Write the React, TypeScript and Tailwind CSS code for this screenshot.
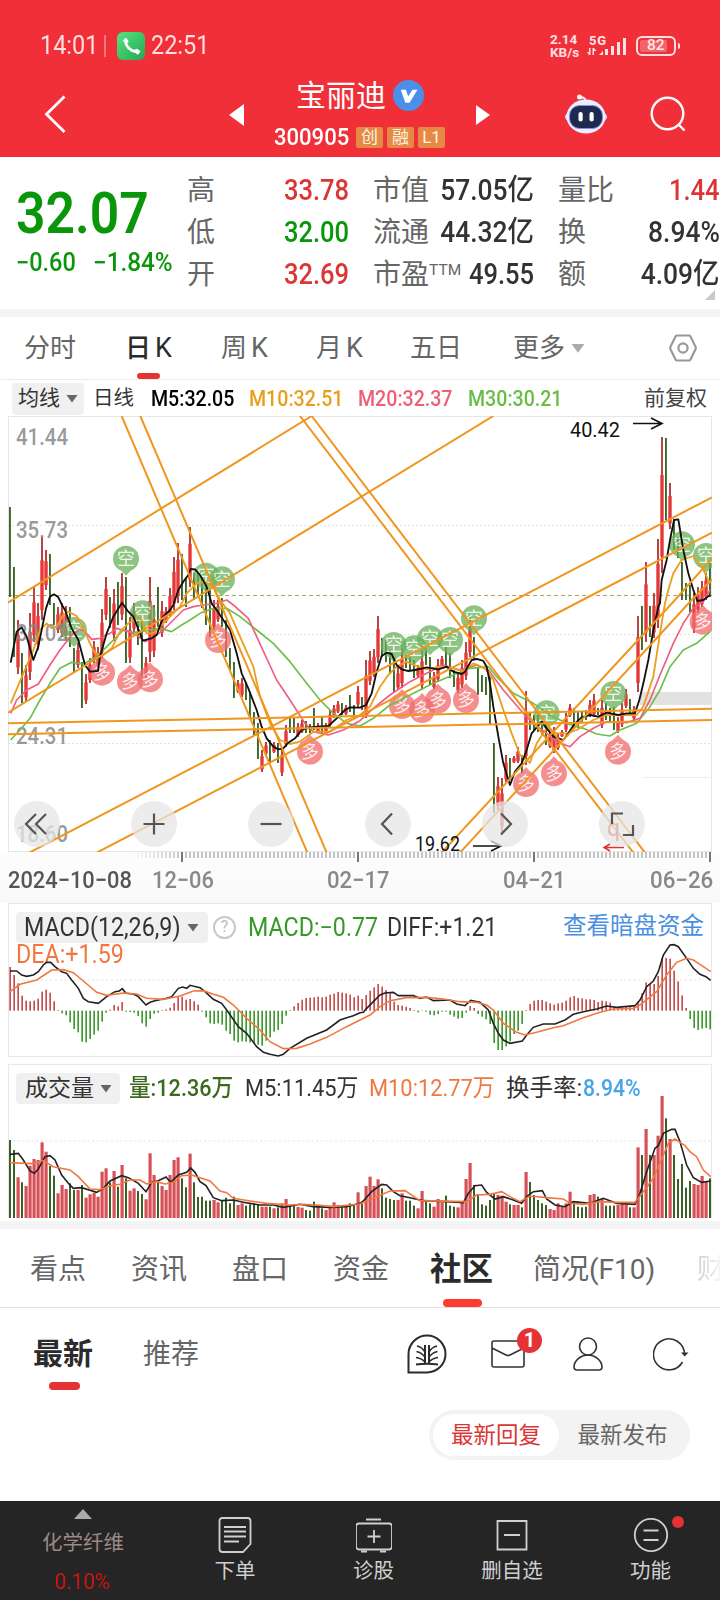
import type { ReactNode } from 'react'
import clsx from 'clsx'

// [high, low] per trading day, negative high = falling candle
const CANDLES: [number, number][] = [
  [-507, 597], [-567, 657], [620, 674], [-653, 703], [665, 702], [613, 680], [587, 642], [603, 650], [537, 620], [550, 590],
  [-554, 605], [-603, 625], [607, 633], [603, 637], [606, 640], [-607, 647], [-648, 672], [643, 668], [-662, 708], [674, 704],
  [658, 683], [641, 663], [647, 667], [609, 658], [577, 620], [-597, 628], [589, 641], [-582, 625], [573, 620], [-577, 663],
  [617, 663], [603, 632], [-617, 645], [-620, 677], [657, 678], [577, 662], [605, 657], [-587, 627], [601, 637], [607, 623],
  [588, 617], [557, 610], [543, 603], [-554, 600], [-577, 607], [527, 587], [-573, 600], [-573, 597], [-577, 608], [-583, 625],
  [-590, 637], [600, 630], [600, 622], [-598, 627], [-620, 657], [-648, 670], [-662, 698], [680, 693], [678, 697], [-682, 700],
  [-692, 717], [-712, 735], [-723, 759], [750, 772], [742, 755], [-740, 762], [742, 753], [-743, 763], [747, 776], [725, 747],
  [-718, 733], [-718, 733], [723, 737], [720, 733], [-721, 733], [-724, 733], [-708, 730], [723, 733], [-717, 733], [723, 735],
  [710, 727], [705, 718], [701, 713], [-703, 715], [705, 715], [-695, 712], [-705, 717], [686, 707], [-697, 710], [660, 718],
  [651, 685], [649, 677], [616, 663], [-638, 657], [-640, 662], [-650, 673], [-657, 692], [667, 690], [648, 688], [-655, 668],
  [-657, 670], [-660, 678], [665, 677], [650, 690], [-650, 665], [-657, 685], [672, 689], [659, 682], [656, 667], [-647, 667],
  [-653, 678], [-670, 687], [672, 693], [660, 688], [642, 680], [617, 657], [-637, 660], [-668, 695], [-675, 692], [-677, 695],
  [-675, 724], [-743, 813], [777, 810], [778, 833], [755, 782], [-758, 780], [756, 763], [747, 763], [-755, 773], [691, 765],
  [-712, 730], [-715, 730], [-715, 732], [-720, 735], [-723, 745], [733, 748], [727, 753], [733, 750], [730, 737], [713, 732],
  [704, 717], [-708, 728], [-712, 728], [-712, 722], [-710, 720], [700, 717], [694, 717], [-708, 715], [700, 728], [-703, 720],
  [-708, 722], [-707, 730], [717, 733], [703, 727], [689, 708], [-699, 715], [706, 720], [616, 692], [-606, 650], [562, 642],
  [-606, 637], [593, 638], [539, 628], [437, 573], [-438, 520], [483, 529], [-519, 550], [-537, 558], [-562, 600], [-583, 600],
  [-585, 612], [593, 633], [587, 613], [581, 607], [573, 600], [-562, 597],
]

const HIST = [
  131, 107, 82, 45, 30, 28, 30, 36, 57, 63, 54, 28, 2, -8, -14, -35, -55, -65, -93, -95, -85, -72, -60, -33, -6, 3, 17, 13, 26, -3,
  -4, -6, -16, -38, -48, -25, -9, -6, 2, 4, 9, 23, 42, 42, 33, 35, 28, 18, -3, -20, -38, -40, -38, -42, -60, -70, -90, -95, -92, -93,
  -95, -100, -102, -105, -90, -80, -63, -58, -40, -15, 2, 13, 23, 33, 38, 39, 40, 42, 40, 42, 48, 51, 56, 54, 52, 48, 40, 45,
  35, 47, 60, 70, 80, 72, 62, 52, 27, 17, 15, 12, 8, 2, -5, 1, -3, -12, -14, -10, -3, -3, -12, -18, -24, -22, -6, 14, 8, -10, -18, -26,
  -40, -97, -118, -118, -107, -92, -70, -60, -40, 2, 20, 30, 32, 32, 27, 22, 18, 22, 24, 30, 40, 44, 38, 37, 34, 34, 32, 26, 30, 28,
  24, 12, 8, 10, 14, 14, 16, 28, 52, 85, 80, 80, 104, 158, 158, 156, 120, 88, 46, 8, -25, -52, -58, -54, -52, -56,
]

const VOLUME = [
  735, 765, 847, 862, 873, 812, 792, 795, 742, 770, 813, 842, 895, 870, 882, 865, 885, 885, 870, 908, 898, 893, 905, 830, 820, 862, 828, 875, 810, 850,
  887, 880, 888, 897, 913, 775, 840, 860, 873, 885, 840, 795, 787, 850, 877, 776, 862, 906, 905, 917, 917, 915, 922, 917, 908, 925, 905, 930, 925, 932,
  928, 928, 928, 935, 935, 935, 940, 937, 925, 912, 930, 930, 936, 938, 945, 947, 920, 932, 940, 945, 932, 922, 930, 930, 932, 925, 932, 892,
  925, 873, 845, 873, 853, 880, 908, 912, 915, 915, 895, 917, 917, 932, 940, 888, 920, 925, 935, 912, 922, 902, 932, 935, 937, 920, 852, 804, 870, 897,
  928, 932, 915, 895, 900, 902, 920, 928, 930, 930, 937, 831, 861, 900, 915, 925, 930, 942, 945, 925, 935, 925, 890, 920, 935, 937, 935, 900, 897, 905,
  912, 932, 932, 932, 930, 925, 928, 937, 937, 757, 780, 702, 780, 780, 722, 603, 670, 732, 780, 852, 807, 878, 858, 867, 870, 843, 860, 850,
]

const M5 =
  '32,1058 50,965 65,952 80,980 100,1050 115,1010 138,895 150,860 162,853 175,862 186,885 195,900 215,955 235,990 255,1065 270,1085 294,1083 300,1040 320,970 340,920 366,878 385,905 400,920 412,950 428,992 455,985 470,975 490,920 510,900 520,885 535,840 550,815 565,795 572,777 585,778 600,795 620,830 635,880 650,900 690,960 710,1030 725,1090 745,1135 770,1200 785,1250 800,1285 820,1310 835,1318 850,1315 865,1298 885,1285 905,1260 930,1252 955,1250 985,1248 1010,1225 1035,1200 1050,1192 1080,1193 1098,1185 1115,1150 1130,1085 1145,1038 1160,1028 1175,1032 1190,1065 1205,1078 1225,1083 1245,1080 1280,1072 1315,1078 1340,1070 1360,1085 1385,1092 1395,1085 1415,1050 1430,1047 1450,1053 1460,1070 1470,1120 1480,1190 1495,1280 1510,1360 1530,1425 1545,1385 1565,1360 1580,1320 1595,1270 1610,1252 1625,1235 1640,1255 1660,1280 1690,1290 1705,1270 1725,1240 1745,1222 1770,1215 1795,1220 1820,1208 1855,1215 1880,1210 1905,1210 1918,1170 1930,1120 1945,1050 1960,960 1975,890 1980,880 1985,810 2000,750 2010,690 2022,630 2035,628 2050,720 2065,790 2080,840 2092,873 2110,870 2130,855'
const M10 =
  '32,1180 70,1090 100,1020 120,960 140,940 155,955 170,950 190,915 205,905 230,918 250,955 270,1000 285,1030 310,1035 335,1015 360,965 385,940 410,925 425,930 440,970 460,970 490,940 520,910 540,890 560,850 590,820 615,815 640,830 660,870 690,910 720,980 760,1070 780,1160 810,1240 840,1290 870,1302 900,1295 940,1265 990,1265 1040,1230 1080,1215 1110,1190 1140,1130 1165,1095 1190,1070 1220,1055 1240,1065 1280,1078 1320,1070 1360,1075 1390,1085 1420,1060 1455,1075 1480,1110 1510,1200 1535,1270 1560,1335 1590,1358 1610,1300 1640,1255 1670,1270 1700,1270 1730,1260 1780,1230 1820,1215 1910,1215 1930,1190 1960,1100 1980,970 1995,880 2005,840 2020,790 2045,750 2080,738 2105,770 2130,820'
const M20 =
  '32,1210 50,1170 80,1140 115,1122 150,1065 180,1020 215,975 240,958 255,965 275,988 300,985 330,970 350,955 385,965 410,975 435,995 460,982 490,960 520,930 550,900 580,890 610,885 650,880 680,870 700,885 745,925 770,980 830,1110 870,1170 915,1240 940,1265 985,1275 1030,1260 1080,1232 1120,1195 1170,1155 1230,1115 1280,1090 1330,1065 1380,1080 1430,1065 1465,1080 1510,1140 1570,1210 1600,1240 1640,1270 1670,1295 1710,1310 1740,1280 1780,1255 1820,1235 1880,1238 1920,1225 1950,1170 1980,1095 2020,1000 2050,940 2080,895 2110,875 2130,840'
const M30 =
  '32,1290 60,1260 90,1225 120,1170 150,1120 180,1075 215,1057 250,1062 290,1040 330,1000 370,960 400,968 440,962 480,955 515,965 545,945 570,930 600,910 640,895 680,895 720,920 770,960 820,1000 870,1055 920,1120 960,1170 1000,1210 1040,1240 1080,1248 1120,1225 1170,1185 1230,1155 1300,1120 1360,1095 1410,1075 1465,1070 1490,1100 1540,1150 1600,1180 1650,1215 1700,1240 1750,1255 1790,1272 1830,1278 1860,1260 1910,1240 1950,1190 1980,1140 2010,1070 2050,1020 2090,1000 2130,965'
const DIFF =
  '30,228 50,228 65,240 80,244 100,240 115,230 130,210 140,202 152,202 165,215 185,230 200,235 215,255 235,280 250,310 265,320 295,325 320,305 345,290 358,288 367,281 378,295 400,297 415,305 438,330 450,322 465,317 500,310 515,305 535,280 548,276 560,280 570,271 600,278 615,290 640,313 665,325 680,345 715,395 740,415 770,455 790,472 810,478 835,483 850,478 870,460 920,430 980,405 1020,375 1045,367 1060,362 1080,353 1090,352 1100,340 1120,320 1140,300 1155,294 1180,292 1195,302 1240,302 1260,310 1280,306 1300,317 1350,315 1370,327 1395,332 1412,316 1440,322 1465,345 1480,385 1495,415 1510,435 1530,445 1567,438 1580,420 1600,397 1630,387 1665,387 1695,375 1720,358 1750,350 1790,342 1820,333 1850,337 1905,332 1920,315 1940,275 1960,258 1975,230 1990,180 2010,150 2022,149 2035,155 2060,190 2080,220 2100,238 2118,245 2132,256'
const DEA =
  '30,290 60,268 110,255 155,225 190,224 220,233 250,258 290,292 320,301 370,294 410,297 440,310 490,313 540,303 580,288 610,287 640,298 670,307 700,330 740,370 780,405 810,440 850,461 890,460 930,447 980,427 1040,395 1080,375 1110,360 1140,335 1170,317 1220,308 1280,307 1330,312 1380,320 1430,322 1460,330 1480,345 1510,385 1550,412 1575,420 1610,412 1660,398 1690,392 1750,368 1800,352 1840,342 1900,340 1920,330 1970,290 2000,240 2030,202 2060,190 2080,195 2110,215 2132,230'
const VOL5 =
  '30,778 55,775 70,795 90,828 103,835 115,822 135,785 150,782 165,795 185,840 205,865 220,880 245,878 290,892 310,880 330,858 365,842 385,848 415,865 438,890 455,862 475,857 498,846 512,862 535,840 560,832 572,819 585,832 600,860 618,872 640,908 665,917 700,915 730,922 780,930 820,930 850,937 900,928 940,935 990,937 1040,935 1080,925 1090,918 1115,890 1145,868 1160,870 1180,890 1200,902 1230,908 1270,917 1340,920 1390,923 1405,895 1425,872 1445,870 1460,892 1485,912 1510,905 1540,915 1565,925 1580,905 1600,890 1627,887 1640,912 1665,930 1695,935 1720,920 1770,925 1810,910 1850,925 1905,928 1920,895 1940,830 1965,760 1975,752 1990,715 2015,703 2025,703 2040,740 2060,810 2080,848 2105,862 2132,858'
const VOL10 =
  '30,803 95,806 130,797 160,815 210,825 235,845 270,882 300,884 330,872 360,868 390,855 420,855 440,867 470,860 495,867 520,862 545,842 575,840 600,848 630,858 660,888 680,893 700,910 750,918 800,925 870,930 910,928 950,930 1000,935 1080,927 1130,905 1170,888 1215,887 1260,917 1400,920 1430,900 1470,898 1505,890 1530,905 1560,920 1590,903 1640,908 1690,912 1710,925 1750,928 1800,920 1850,922 1905,922 1930,890 1960,850 1990,780 2005,745 2025,732 2040,742 2055,752 2070,770 2090,785 2110,825 2132,845'

const TRENDS = [
  '24,878 935,318', '365,318 922,1628', '421,318 980,1628', '900,318 1900,1628', '935,318 1935,1628', '24,1208 1480,318',
  '88,1628 2136,562', '290,1628 2136,668', '24,1240 2136,1196', '24,1273 2136,1230', '1325,1628 2025,870 2136,745', '1380,1628 2075,870 2136,808',
]

const SHORTS = [
  [378, 746], [222, 960], [428, 910], [618, 797], [666, 808], [1181, 1005], [1242, 1015], [1290, 985], [1350, 990],
  [1422, 925], [1640, 1210], [1840, 1152], [2046, 703], [2118, 738],
]
const LONGS = [
  [306, 1088], [390, 1115], [450, 1108], [654, 990], [930, 1325], [1206, 1188], [1266, 1200], [1314, 1172],
  [1398, 1170], [1578, 1422], [1662, 1390], [1854, 1325], [2108, 935],
]

const GRID_LABELS = [
  { y: 444.5, text: '41.44' },
  { y: 537.5, text: '35.73' },
  { y: 640.5, text: '30.02' },
  { y: 743.5, text: '24.31' },
  { y: 841.5, text: '18.60' },
]

// condensed digits, as the quote numbers use
function Num({ className, children }: { className?: string; children: ReactNode }) {
  return <span className={clsx('inline-block whitespace-nowrap', className)}>{children}</span>
}

function Caret({ className }: { className?: string }) {
  return (
    <svg viewBox="0 0 12 9" className={clsx('shrink-0', className)}>
      <path d="M0.5 1h11L6 8.5z" fill="currentColor" />
    </svg>
  )
}

function StatusBar() {
  return (
    <div className="flex h-[66px] items-center pt-[25px] pl-10 text-[25.500px] leading-none text-white/85">
      <Num className="w-[62px] origin-left scale-x-[.92]">14:01</Num>
      <span className="ml-[2px] h-[22px] w-[2px] bg-white/35" />
      <svg viewBox="0 0 28 28" className="ml-[11px] h-7 w-7">
        <defs>
          <linearGradient id="call" x1="0" y1="0" x2="1" y2="1">
            <stop offset="0" stopColor="#55e57f" />
            <stop offset="1" stopColor="#25a653" />
          </linearGradient>
        </defs>
        <rect width="28" height="28" rx="6" fill="url(#call)" />
        <path d="M8 8c1 7 5 11 12 12" fill="none" stroke="#fff" strokeWidth="2.600" />
        <path d="M6.300 8.500l2.500-2.500 2.500 3.500-2.500 2zM17 19.500l2.300-2.500 3.700 2.200-2 3z" fill="#fff" stroke="#fff" strokeLinejoin="round" />
      </svg>
      <Num className="ml-[6px] w-[62px] origin-left scale-x-[.92]">22:51</Num>
      <div className="ml-[337px] w-[33px] text-[13.500px] leading-[13px] font-bold whitespace-nowrap">
        <div>2.14</div>
        <div>KB/s</div>
      </div>
      <svg viewBox="0 0 42 26" className="ml-[4px] h-[26px] w-[42px]">
        <text x="2" y="12" fontSize="13" fontWeight="700" fill="#fff" fillOpacity=".9" textLength="17">5G</text>
        <g fill="#fff" fillOpacity=".85">
          <path d="M2 15h1.500v7H2l-2-3h2zM7 22h-1.500v-7H7l2.500 3H7z" />
          <path d="M12 22l4-4v4zM18 16h3v6h-3zM24 13h3v9h-3zM30 9h3v13h-3zM36 5h3v17h-3z" />
        </g>
      </svg>
      <div className="ml-[7px] flex h-5 w-10 items-center rounded-md border-2 border-white/85 p-[2px]">
        <span className="flex h-full w-[27px] items-center rounded-xs bg-white/25 pl-[7px] text-[15.500px] font-medium">82</span>
      </div>
      <span className="ml-[2px] h-[6px] w-[2px] rounded-r bg-white/85" />
    </div>
  )
}

function Tag({ children }: { children: ReactNode }) {
  return (
    <span className="flex h-[21px] w-[27px] items-center justify-center rounded-xs bg-[#e58a45] text-[17px] leading-none text-[#fff3e0]">
      {children}
    </span>
  )
}

function Header() {
  return (
    <header className="h-[157px] bg-[#f12f38] text-white">
      <StatusBar />
      <div className="flex h-[91px] items-center pt-[4px]">
        <svg viewBox="0 0 22 38" className="ml-[44px] h-[38px] w-[22px]" fill="none" stroke="#fff" strokeWidth="2.800">
          <path d="M20.500 1.500L2.500 19.300l18 17.700" />
        </svg>
        <svg viewBox="0 0 16 24" className="mt-[3px] ml-[163px] h-6 w-4">
          <path d="M15 1v22L0 12z" fill="#fff" />
        </svg>
        <div className="ml-[29px] flex w-[174px] flex-col">
          <div className="flex h-[44px] items-center pl-[22px]">
            <span className="text-[30px] leading-none">宝丽迪</span>
            <svg viewBox="0 0 30 30" className="ml-[7px] h-[31px] w-[31px]">
              <circle cx="15" cy="15" r="15" fill="#4a8fea" />
              <path d="M7.500 9.500h5l2.200 6.500 4-6.500h5L16 22h-4z" fill="#fff" />
            </svg>
          </div>
          <div className="flex h-[36px] items-center gap-1 pt-[3px]">
            <Num className="w-[78px] origin-left scale-x-90 text-[24.500px] leading-none font-medium">300905</Num>
            <Tag>创</Tag>
            <Tag>融</Tag>
            <Tag>L1</Tag>
          </div>
        </div>
        <svg viewBox="0 0 15 22" className="mt-[3px] ml-[28px] h-[22px] w-[15px]">
          <path d="M0 1v20l14-10z" fill="#fff" />
        </svg>
        <svg viewBox="0 0 44 42" className="ml-[73px] h-[42px] w-11">
          <path d="M15 4.500q6-1 7 4" fill="none" stroke="#e8e8ff" strokeWidth="2" />
          <circle cx="15.500" cy="4" r="2.500" fill="#fff" />
          <ellipse cx="22" cy="24" rx="21" ry="8" fill="#d9defa" />
          <ellipse cx="22" cy="23.500" rx="19.500" ry="17" fill="#eceeff" />
          <rect x="5.500" y="12.500" width="33" height="23" rx="10" fill="#1c2b4d" stroke="#8d8de0" />
          <rect x="14.500" y="19" width="4.200" height="9.500" rx="2" fill="#fff" />
          <rect x="25.500" y="19" width="4.200" height="9.500" rx="2" fill="#fff" />
        </svg>
        <svg viewBox="0 0 36 36" className="ml-[42px] h-9 w-9" fill="none" stroke="#fff" strokeWidth="2.400">
          <circle cx="17.500" cy="17.500" r="15.800" />
          <path d="M28.500 28.500l6 6" />
        </svg>
      </div>
    </header>
  )
}

function Field({ label, value, color, sup }: { label: string; value: string; color: string; sup?: string }) {
  const hasUnit = /[亿%]$/.test(value)
  return (
    <div className="flex h-[42px] items-center justify-between whitespace-nowrap">
      <span className="flex pt-px text-[28px] leading-none text-[#666]">
        {label}
        {sup && <span className="pt-[2px] text-[15.500px]">{sup}</span>}
      </span>
      <Num className={clsx('w-0 text-[29px] leading-none font-medium', color)}>
        <span className={clsx('float-right origin-right', hasUnit ? 'scale-x-[.91]' : 'scale-x-[.88]')}>{value}</span>
      </Num>
    </div>
  )
}

function Quote() {
  return (
    <section className="flex h-[152px] pt-[12px]">
      <div className="flex w-[187px] flex-col items-start pl-[16px] text-[#0a960a]">
        <Num className="mt-[15px] origin-left scale-x-[.89] text-[58px] leading-[58px] font-semibold">32.07</Num>
        <div className="mt-[5px] flex text-[25px] leading-[32px] font-medium">
          <Num className="w-[77px] origin-left scale-x-[.94]">−0.60</Num>
          <Num className="origin-left scale-x-[.97]">−1.84%</Num>
        </div>
      </div>
      <div className="w-[162px]">
        <Field label="高" value="33.78" color="text-[#dc3535]" />
        <Field label="低" value="32.00" color="text-[#0a960a]" />
        <Field label="开" value="32.69" color="text-[#dc3535]" />
      </div>
      <div className="ml-6 w-[161px]">
        <Field label="市值" value="57.05亿" color="text-[#333]" />
        <Field label="流通" value="44.32亿" color="text-[#333]" />
        <Field label="市盈" sup="TTM" value="49.55" color="text-[#333]" />
      </div>
      <div className="relative ml-6 w-[162px]">
        <Field label="量比" value="1.44" color="text-[#dc3535]" />
        <Field label="换" value="8.94%" color="text-[#333]" />
        <Field label="额" value="4.09亿" color="text-[#333]" />
        <svg viewBox="0 0 10 10" className="absolute right-[5px] bottom-[9px] h-[10px] w-[10px]">
          <path d="M10 0v10H0z" fill="#c8c8c8" />
        </svg>
      </div>
    </section>
  )
}

function PeriodTabs() {
  return (
    <nav className="flex h-[63px] items-center border-b border-[#ececec] pl-[24px] text-[26px] leading-none text-[#666]">
      <span className="w-[101px]">分时</span>
      <span className="relative flex h-full w-[96px] items-center gap-1 font-medium text-[#2b2b2b]">
        日<Num className="origin-left text-[27px] font-normal">K</Num>
        <span className="absolute bottom-0 left-[12px] h-[6px] w-[23px] rounded-full bg-[#e53235]" />
      </span>
      <span className="flex w-[95px] items-center gap-1">周<Num className="text-[27px]">K</Num></span>
      <span className="flex w-[94px] items-center gap-1">月<Num className="text-[27px]">K</Num></span>
      <span className="w-[103px]">五日</span>
      <span>更多</span>
      <Caret className="ml-[6px] h-[12px] w-[14px] text-[#aaa]" />
      <svg viewBox="0 0 28 28" className="ml-[84px] h-7 w-7" fill="none" stroke="#999" strokeWidth="2.200">
        <path d="M8 1.500h12q1 0 1.500.9l5 10.200q.6 1.400 0 2.600l-5 10.400q-.5.900-1.500.9H8q-1 0-1.500-.9l-5-10.400q-.6-1.300 0-2.600l5-10.200Q7 1.500 8 1.500z" />
        <circle cx="14" cy="14" r="4.600" />
      </svg>
    </nav>
  )
}

function Averages() {
  return (
    <div className="flex h-[36px] items-center pt-px text-[22px] leading-none whitespace-nowrap">
      <div className="ml-3 flex h-8 w-[72px] items-center rounded bg-[#f0f0f0] pl-[6px] text-[21px] text-[#333]">
        均线
        <Caret className="ml-[6px] h-[9px] w-3 text-[#666]" />
      </div>
      <span className="ml-[9px] w-[58px] text-[20.500px] text-[#333]">日线</span>
      <Num className="w-[98px] origin-left scale-x-[.89] font-medium text-black">M5:32.05</Num>
      <Num className="w-[109px] origin-left scale-x-[.89] font-medium text-[#e79f1c]">M10:32.51</Num>
      <Num className="w-[110px] origin-left scale-x-[.89] font-medium text-[#ee5f75]">M20:32.37</Num>
      <Num className="w-[176px] origin-left scale-x-[.89] font-medium text-[#69bd45]">M30:30.21</Num>
      <span className="text-[21px] text-[#444]">前复权</span>
    </div>
  )
}

function Candle({ day, index }: { day: [number, number]; index: number }) {
  const falling = day[0] < 0
  const high = Math.abs(day[0])
  const len = day[1] - high
  const x = 10 + index * 4
  if (falling) return <rect x={x - 1} y={high} width="1.900" height={len} fill="#3c662b" />
  return (
    <g>
      <rect x={x - 1} y={high} width="2" height={len} fill="#b84444" />
      <rect x={x - 1.7} y={high + len * 0.28} width="3.400" height={len * 0.6} fill="#e63838" />
    </g>
  )
}

function Marker({ x, y, long }: { x: number; y: number; long?: boolean }) {
  return (
    <g transform={`translate(${x} ${y})`} opacity=".76">
      <circle r="39" fill={long ? '#f26d6d' : '#6ab25c'} />
      <path d={long ? 'M-16 -34L0 -51L16 -34z' : 'M-16 34L0 51L16 34z'} fill={long ? '#f26d6d' : '#6ab25c'} />
      <text y="19" fontSize="54" textAnchor="middle" fill="#fff" fillOpacity=".85">{long ? '多' : '空'}</text>
    </g>
  )
}

function RoundButton({ d }: { d: string }) {
  return (
    <button type="button" className="flex h-[46px] w-[46px] items-center justify-center rounded-full bg-[#e6e6e6]/75">
      <svg viewBox="0 0 26 26" className="h-[26px] w-[26px]" fill="none" stroke="#555" strokeWidth="2.200">
        <path d={d} />
      </svg>
    </button>
  )
}

function PriceChart() {
  return (
    <div className="relative mx-2 h-[436px]">
      <svg viewBox="8 416 704 436" className="h-[436px] w-[704px]">
        <rect x="8.500" y="416.500" width="703" height="435" fill="none" stroke="#e6e6e6" />
        <rect x="640" y="692" width="72" height="13" fill="#e2e2e2" />
        <g stroke="#e4e4e4" strokeDasharray="2 2">
          <path d="M8 525.500h704M8 634.500h704M8 743.500h704" />
          <path d="M643 777.500h69" stroke="#eee" strokeDasharray="none" />
        </g>
        <path d="M8 595.500h704" stroke="#b8a05a" strokeDasharray="4 3" />
        {CANDLES.map((day, i) => <Candle key={i} day={day} index={i} />)}
        <g transform="translate(0 310) scale(.33333)" fill="none" strokeLinejoin="round">
          {SHORTS.map(([x, y]) => <Marker key={x} x={x} y={y} />)}
          {LONGS.map(([x, y]) => <Marker key={x} x={x} y={y} long />)}
        </g>
        {GRID_LABELS.map(label => (
          <text key={label.text} x="16" y={label.y} fontSize="23" fontWeight="500" fill="#888" fillOpacity=".85" textLength="52" lengthAdjust="spacingAndGlyphs">
            {label.text}
          </text>
        ))}
        <g transform="translate(0 310) scale(.33333)" fill="none" strokeLinejoin="round">
          <polyline points={M30} stroke="#6cc04a" strokeWidth="5" />
          <polyline points={M20} stroke="#ee5f80" strokeWidth="5" />
          <polyline points={M10} stroke="#eaa01e" strokeWidth="5.500" />
          <polyline points={M5} stroke="#111" strokeWidth="5.500" />
          {TRENDS.map(points => <polyline key={points} points={points} stroke="#f0961e" strokeWidth="6" />)}
        </g>
        <g fontSize="21" fill="#111">
          <text x="570" y="436.500" textLength="50" lengthAdjust="spacingAndGlyphs">40.42</text>
          <text x="415" y="850.500" textLength="45" lengthAdjust="spacingAndGlyphs">19.62</text>
        </g>
        <g fill="none" stroke="#111" strokeWidth="1.600">
          <path d="M633 423.500h29M651 418l11 5.500-11 5.500" />
          <path d="M473 846h28M491 841l10 5-10 5" />
        </g>
        <text x="607" y="836" fontSize="23" fill="#d33">q</text>
        <path d="M624 847.500h-19M610 844l-6 3.500 6 3.500" fill="none" stroke="#d33" strokeWidth="1.500" />
      </svg>
      <div className="absolute bottom-[5px] left-[6px] flex gap-[71px]">
        <RoundButton d="M12 3L2 13l10 10M22 3L12 13l10 10" />
        <RoundButton d="M13 2.500v21M2.500 13h21" />
        <RoundButton d="M2.500 13h21" />
        <RoundButton d="M17 2.500L7 13l10 10.500" />
        <RoundButton d="M9 2.500L19 13 9 23.500" />
        <RoundButton d="M3 13V2.500h11M24 14v10H14" />
      </div>
    </div>
  )
}

function TimeAxis() {
  return (
    <div className="h-[51px] bg-gradient-to-b from-[#fdfdfd] to-[#f9f9f9]">
      <svg viewBox="0 0 720 10" className="block h-[10px] w-[720px]">
        {CANDLES.map((_, i) =>
          i % 44 === 43
            ? <rect key={i} x={9 + i * 4} width="2" height="10" fill="#777" />
            : i > 30 && <rect key={i} x={9 + i * 4} width="2" height="6" fill="#c4c4c4" opacity={Math.min(1, (i - 30) / 14)} />,
        )}
      </svg>
      <div className="flex pt-[4px] pl-[8px] text-[24px] leading-[28px] font-medium whitespace-nowrap text-[#888]">
        <Num className="w-[144px] origin-left scale-x-[.91] text-[#555]">2024−10−08</Num>
        <Num className="w-[175px] origin-left scale-x-[.91]">12−06</Num>
        <Num className="w-[176px] origin-left scale-x-[.92]">02−17</Num>
        <Num className="w-[147px] origin-left scale-x-[.92]">04−21</Num>
        <Num className="origin-left scale-x-[.93]">06−26</Num>
      </div>
    </div>
  )
}

function MacdPanel() {
  return (
    <section className="relative mx-2 h-[154px] border border-[#e8e8e8]">
      <div className="flex h-[46px] items-center pl-[7px] text-[25px] leading-none whitespace-nowrap text-[#333]">
        <div className="flex h-[31px] w-[192px] items-center rounded bg-[#f0f0f0] pl-[8px]">
          <Num className="w-[163px] origin-left scale-x-[.93]">MACD(12,26,9)</Num>
          <Caret className="h-[9px] w-3 text-[#666]" />
        </div>
        <span className="ml-[5px] flex h-[23px] w-[23px] items-center justify-center rounded-full border-2 border-[#c8c8c8] text-[16px] text-[#bbb]">?</span>
        <Num className="ml-[12px] w-[139px] origin-left scale-x-[.93] text-[#349a27]">MACD:−0.77</Num>
        <Num className="w-[176px] origin-left scale-x-[.92]">DIFF:+1.21</Num>
        <span className="text-[23.500px] text-[#4a8fe0]">查看暗盘资金</span>
      </div>
      <div className="-mt-[8px] flex h-[24px] items-center pl-[7px] text-[25px] leading-none text-[#f07840]">
        <Num className="origin-left scale-x-[.93]">DEA:+1.59</Num>
      </div>
      <svg viewBox="24 24 2112 462" className="absolute -top-px -left-px h-[154px] w-[704px]" fill="none">
        <path d="M24 255H2136" stroke="#eee" strokeWidth="4" strokeDasharray="7 7" />
        {HIST.map((v, i) => (
          <rect key={i} x={28 + i * 12} y={v > 0 ? 347 - v : 347} width="5" height={Math.abs(v)} fill={v > 0 ? '#c25050' : '#3f9a32'} />
        ))}
        <polyline points={DIFF} stroke="#222" strokeWidth="4.800" />
        <polyline points={DEA} stroke="#f07840" strokeWidth="4.800" />
      </svg>
    </section>
  )
}

function VolumePanel() {
  return (
    <section className="relative mx-2 mt-[7px] h-[154px] border border-b-0 border-[#e8e8e8]">
      <div className="flex h-[46px] items-center pl-[7px] text-[23.500px] leading-none whitespace-nowrap text-[#333]">
        <div className="flex h-[31px] w-[104px] items-center rounded bg-[#f0f0f0] pl-[9px] text-[23px]">
          成交量
          <Caret className="ml-[6px] h-[9px] w-3 text-[#666]" />
        </div>
        <Num className="ml-[9px] w-[116px] origin-left scale-x-[.92] pt-px font-medium text-[#3a6a1c]">量:12.36万</Num>
        <Num className="w-[124px] origin-left scale-x-[.93] pt-px">M5:11.45万</Num>
        <Num className="w-[137px] origin-left scale-x-[.93] pt-px text-[#f07840]">M10:12.77万</Num>
        <span className="w-[77px] pt-px">换手率:</span>
        <Num className="origin-left scale-x-[.9] pt-px font-medium text-[#43a6e8]">8.94%</Num>
      </div>
      <svg viewBox="24 507 2112 462" className="absolute -top-px -left-px h-[154px] w-[704px]" fill="none">
        <path d="M24 738H2136" stroke="#eee" strokeWidth="4" strokeDasharray="7 7" />
        {VOLUME.map((top, i) => {
          const falling = CANDLES[i][0] < 0
          return (
            <rect key={i} x={falling ? 27 + i * 12 : 25.5 + i * 12} y={top} width={falling ? 6 : 9.5} height={969 - top} fill={falling ? '#3c5f26' : '#d65055'} />
          )
        })}
        <polyline points={VOL5} stroke="#222" strokeWidth="4.800" />
        <polyline points={VOL10} stroke="#f07840" strokeWidth="4.800" />
      </svg>
    </section>
  )
}

function SectionTabs() {
  return (
    <nav className="flex h-[79px] items-center overflow-hidden border-b border-[#dedede] pl-[30px] text-[28px] leading-none whitespace-nowrap text-[#666]">
      <span className="w-[101px] shrink-0 pt-[3px]">看点</span>
      <span className="w-[101px] shrink-0 pt-[3px]">资讯</span>
      <span className="w-[101px] shrink-0 pt-[3px]">盘口</span>
      <span className="w-[97px] shrink-0 pt-[3px]">资金</span>
      <span className="relative flex h-full w-[103px] shrink-0 items-center pt-[3px] text-[31.500px] font-bold text-[#2b2b2b]">
        社区
        <span className="absolute bottom-0 left-[13px] h-2 w-[39px] rounded-full bg-[#ff3b30]" />
      </span>
      <span className="w-[164px] shrink-0 pt-[3px]">简况(F10)</span>
      <span className="shrink-0 bg-gradient-to-r from-[#ccc] to-white bg-clip-text pt-[3px] text-transparent">财</span>
    </nav>
  )
}

function Feed() {
  return (
    <section className="h-[193px]">
      <div className="flex h-[90px] items-center pt-px text-[28px] leading-none text-[#666]">
        <span className="relative ml-[33px] flex h-full w-[110px] items-center text-[30px] font-bold text-[#2b2b2b]">
          最新
          <span className="absolute bottom-[8px] left-[16px] h-[8px] w-[31px] rounded-full bg-[#e53235]" />
        </span>
        <span className="w-[264px] pt-[2px]">推荐</span>
        <svg viewBox="0 0 40 40" className="h-10 w-10" fill="none" stroke="#2b2b2b" strokeWidth="2">
          <path d="M1.500 38.500V20A18.500 18.500 0 1 1 20 38.500z" />
          <path d="M9 30.500q11-1.500 22 0M18 11v18.500M22 11v18.500" />
          <path d="M10 12q5 1 8 6M9.500 17.500q5 1 8.500 5.500M9 23.500q5 .5 9 4.500M30 12q-5 1-8 6M30.500 17.500q-5 1-8.500 5.500M31 23.500q-5 .5-9 4.500" strokeWidth="1.600" />
        </svg>
        <div className="relative ml-[44px]">
          <svg viewBox="0 0 34 28" className="block h-7 w-[34px]" fill="none" stroke="#333" strokeWidth="1.600">
            <rect x="1" y="1" width="32" height="26" rx="2" />
            <path d="M1 8l14 7q2 1 4 0L33 8" />
          </svg>
          <span className="absolute -top-[12px] left-[26px] flex h-[25px] w-[25px] items-center justify-center rounded-full bg-[#e53235] text-[20px] font-bold text-white">1</span>
        </div>
        <svg viewBox="0 0 30 34" className="ml-[48px] h-[34px] w-[30px]" fill="none" stroke="#333" strokeWidth="1.600">
          <circle cx="15" cy="9.500" r="8.500" />
          <path d="M4 33h22q3 0 3-3.500C28.500 23 22 18 15 18S1.500 23 1 29.500Q1 33 4 33z" />
        </svg>
        <svg viewBox="0 0 36 34" className="ml-[50px] h-[34px] w-9" fill="none" stroke="#333" strokeWidth="1.600">
          <path d="M31.500 17A15.500 15.500 0 1 0 29.500 25" />
          <path d="M28 15.500h7.500l-3.800 4z" fill="#333" stroke="none" />
        </svg>
      </div>
      <div className="mt-[12px] ml-[429px] flex h-[50px] w-[261px] items-center rounded-full bg-[#f3f3f3] p-1 text-[22.500px] leading-none text-[#666]">
        <span className="flex h-[42px] w-[126px] items-center justify-center rounded-full bg-white text-[#dc3535]">最新回复</span>
        <span className="flex flex-1 items-center justify-center">最新发布</span>
      </div>
    </section>
  )
}

function NavItem({ className, label, children }: { className: string; label: string; children: ReactNode }) {
  return (
    <div className={clsx('flex shrink-0 flex-col items-center pt-[15px] text-[20.500px] leading-none', className)}>
      <svg viewBox="0 0 36 38" className="h-[38px] w-9" fill="none" stroke="#d0d0d0" strokeWidth="1.800">
        {children}
      </svg>
      <span className="mt-[7px]">{label}</span>
    </div>
  )
}

function BottomBar() {
  return (
    <footer className="flex h-[99px] bg-[#252525] text-[#d0d0d0]">
      <div className="flex w-[166px] flex-col items-center pt-[8px]">
        <svg viewBox="0 0 18 10" className="h-[10px] w-[18px]">
          <path d="M9 0l9 10H0z" fill="#aaa" />
        </svg>
        <span className="mt-[14px] text-[20.500px] leading-none text-[#9c8a84]">化学纤维</span>
        <Num className="mt-[17px] scale-x-[.94] text-[22px] leading-none text-[#cf1414]">0.10%</Num>
      </div>
      <NavItem className="w-[138px]" label="下单">
        <path d="M5.500 2h25q3 0 3 3v23L26 36H5.500q-3 0-3-3V5q0-3 3-3zM7 11h22M7 15.500h22M7 20.500h22M7 25.500h15" />
      </NavItem>
      <NavItem className="w-[139px]" label="诊股">
        <rect x="0" y="7.500" width="36" height="26" rx="3" />
        <path d="M10 3.500h15M18 14v13M11.500 20.500h13M5 35.500h6M24 35.500h6" />
      </NavItem>
      <NavItem className="w-[138px]" label="删自选">
        <path d="M3.500 5h29v28.500h-29zM10 19h16" />
      </NavItem>
      <div className="relative">
        <NavItem className="w-[139px]" label="功能">
          <circle cx="18" cy="19" r="16.200" />
          <path d="M10.500 14.500h15M10.500 24h15" />
        </NavItem>
        <span className="absolute top-[15px] left-[91px] h-3 w-3 rounded-full bg-[#e53235]" />
      </div>
    </footer>
  )
}

export default function App() {
  return (
    <main className="h-[1600px] w-[720px] overflow-hidden bg-white font-['Roboto','Noto_Sans_CJK_SC',sans-serif]">
      <Header />
      <Quote />
      <div className="h-2 bg-[#f4f4f4]" />
      <PeriodTabs />
      <Averages />
      <PriceChart />
      <TimeAxis />
      <MacdPanel />
      <VolumePanel />
      <div className="mt-[3px] h-2 bg-[#f4f4f4]" />
      <SectionTabs />
      <Feed />
      <BottomBar />
    </main>
  )
}
